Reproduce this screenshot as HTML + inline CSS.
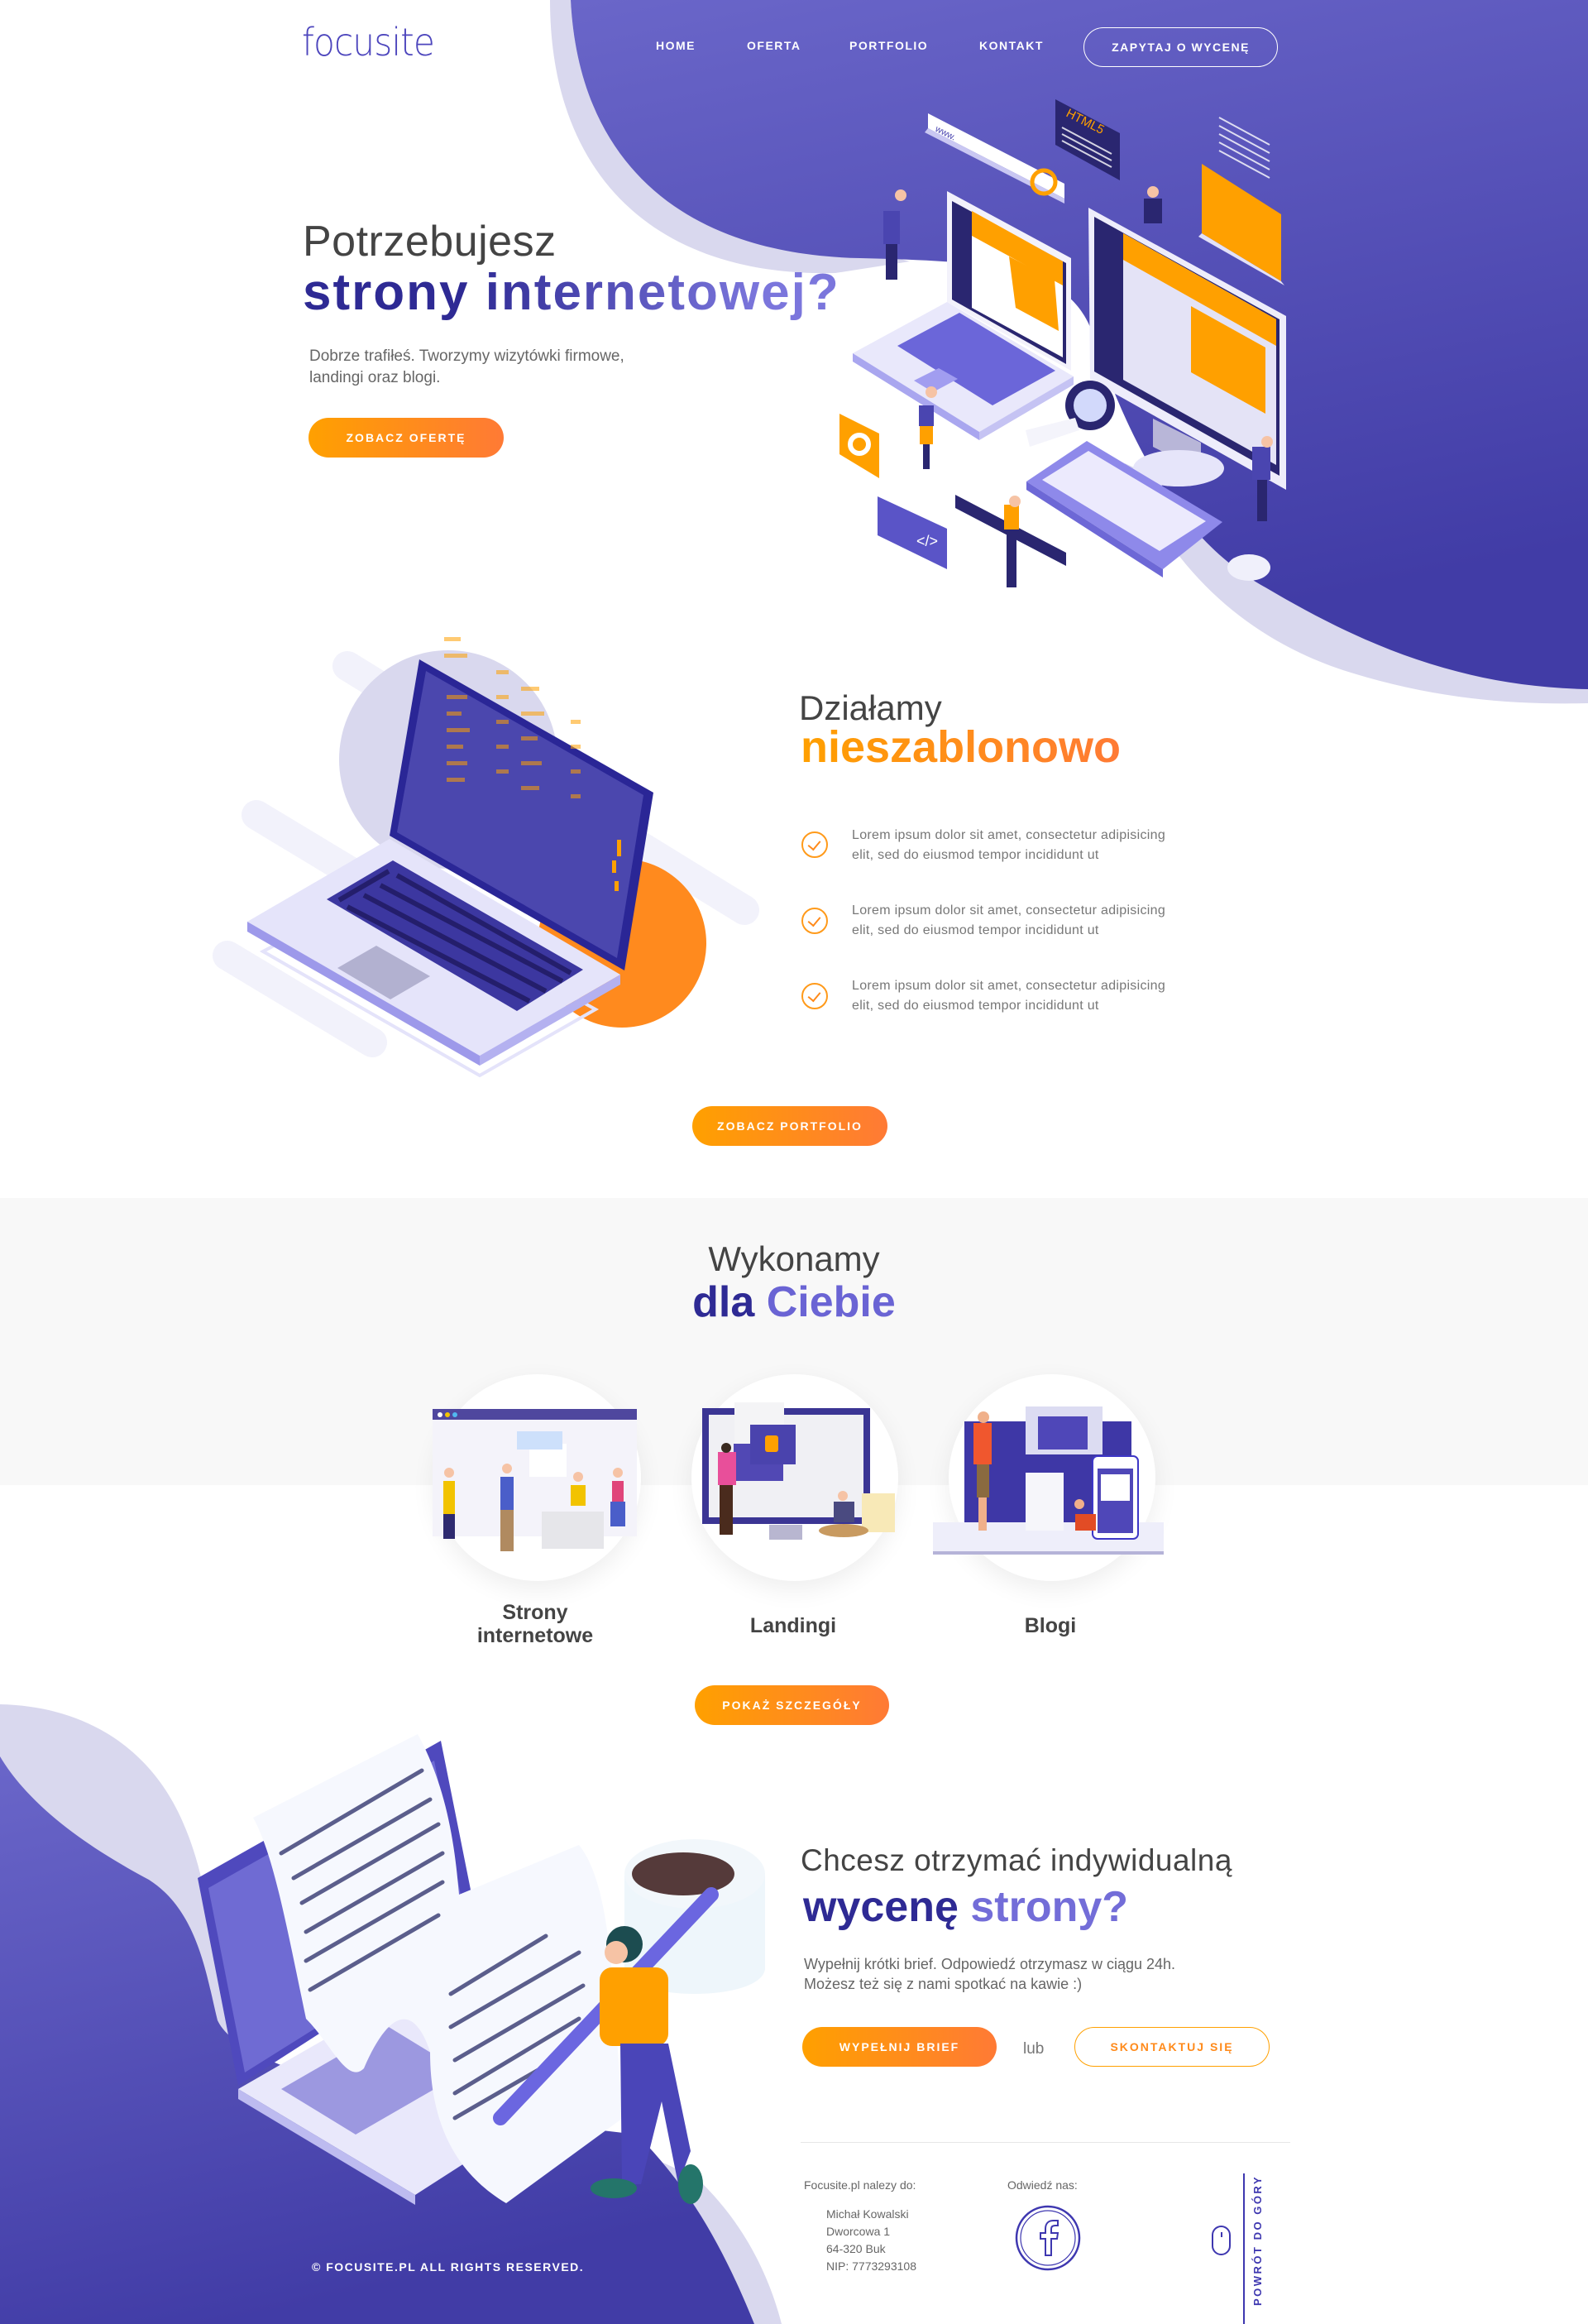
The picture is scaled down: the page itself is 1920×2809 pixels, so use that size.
<!DOCTYPE html>
<html><head><meta charset="utf-8">
<style>
*{margin:0;padding:0;box-sizing:border-box}
body{width:1920px;height:2809px;position:relative;overflow:hidden;background:#fff;font-family:"Liberation Sans",sans-serif;color:#555}
.a{position:absolute}
.btn{position:absolute;height:48px;border-radius:24px;background:linear-gradient(90deg,#ffa000,#ff7a35);color:#fff;font-weight:bold;font-size:14px;letter-spacing:2px;display:flex;align-items:center;justify-content:center}
.nav{position:absolute;top:47px;color:#fff;font-weight:bold;font-size:14px;letter-spacing:1.5px}
.li{position:absolute;left:1030px;font-size:16px;line-height:24px;color:#777;letter-spacing:.3px}
.chk{position:absolute;left:969px;width:32px;height:32px;border:2px solid #ff9a1a;border-radius:50%}
.chk:after{content:"";position:absolute;left:9px;top:6px;width:7px;height:12px;border-right:2.5px solid #ff8a1a;border-bottom:2.5px solid #ff8a1a;transform:rotate(40deg)}
.circ{position:absolute;width:250px;height:250px;border-radius:50%;background:#fff;box-shadow:0 10px 30px rgba(0,0,0,.07)}
.lab{position:absolute;width:260px;text-align:center;font-weight:bold;font-size:25px;color:#444;line-height:28px}
</style></head><body>

<!-- top blob -->
<svg class="a" style="left:0;top:0" width="1920" height="900">
<defs><linearGradient id="pg" x1="0" y1="0" x2="0.3" y2="1"><stop offset="0" stop-color="#6a66c9"/><stop offset="1" stop-color="#413ca6"/></linearGradient></defs>
<path d="M665,0 C665,210 790,335 1010,330 L1100,316 L1040,300 C830,296 700,200 690,0 Z" fill="#d9d8ee"/>
<path d="M1360,560 C1420,700 1520,780 1640,815 C1740,845 1830,852 1920,850 L1920,820 Z" fill="#d9d8ee"/>
<path d="M690,0 C700,200 830,308 1040,312 C1200,316 1290,322 1320,400 C1360,520 1420,650 1530,710 C1640,775 1760,830 1920,833 L1920,0 Z" fill="url(#pg)"/>
</svg>

<!-- hero illustration -->
<svg class="a" style="left:0;top:0" width="1920" height="760">
<!-- www bar -->
<polygon points="1122,137 1287,222 1287,240 1122,155" fill="#fff"/><polygon points="1122,155 1287,240 1287,246 1118,160" fill="#c9c7f2"/>
<text x="1130" y="158" font-size="11" fill="#4a45b0" transform="rotate(27 1130 158)" font-family="Liberation Sans">www.</text>
<circle cx="1262" cy="220" r="14" fill="none" stroke="#ffa000" stroke-width="5"/>
<!-- html5 -->
<polygon points="1276,120 1354,161 1354,218 1276,175" fill="#2a2670"/>
<text x="1288" y="140" font-size="15" fill="#ffa000" transform="rotate(27 1288 140)" font-family="Liberation Sans">HTML5</text>
<g stroke="#fff" stroke-width="2" opacity=".8"><line x1="1284" y1="154" x2="1344" y2="186"/><line x1="1284" y1="162" x2="1344" y2="194"/><line x1="1284" y1="170" x2="1344" y2="202"/></g>
<!-- folder -->
<g stroke="#fff" stroke-width="2" opacity=".8"><line x1="1474" y1="142" x2="1535" y2="175"/><line x1="1474" y1="152" x2="1535" y2="185"/><line x1="1474" y1="162" x2="1535" y2="195"/><line x1="1474" y1="172" x2="1535" y2="205"/><line x1="1474" y1="182" x2="1535" y2="215"/></g>
<polygon points="1453,198 1549,259 1549,340 1453,282" fill="#ffa000"/>
<polygon points="1453,282 1549,340 1553,345 1449,286" fill="#e3e1f8"/>
<!-- laptop -->
<polygon points="1031,427 1145,365 1298,455 1184,522" fill="#e9e8fb"/>
<polygon points="1031,427 1184,522 1184,532 1031,437" fill="#a9a6ef"/>
<polygon points="1184,522 1298,455 1298,465 1184,532" fill="#c5c3f3"/>
<polygon points="1085,418 1160,378 1276,448 1200,490" fill="#6b66d9"/>
<polygon points="1105,460 1135,445 1158,458 1128,474" fill="#a19df0"/>
<polygon points="1145,231 1295,312 1295,448 1145,365" fill="#f3f2fb"/>
<polygon points="1151,243 1289,318 1289,440 1151,362" fill="#2a2670"/>
<polygon points="1175,255 1285,316 1285,432 1175,372" fill="#fff"/>
<polygon points="1175,255 1285,316 1285,345 1175,285" fill="#ffa000"/>
<polygon points="1220,310 1275,338 1280,400 1228,372" fill="#ffa000"/>
<!-- monitor -->
<polygon points="1316,251 1555,382 1555,592 1318,459" fill="#eeedfb"/>
<polygon points="1323,262 1547,386 1547,575 1323,449" fill="#2a2670"/>
<polygon points="1358,282 1543,386 1543,562 1358,459" fill="#e4e3f6"/>
<polygon points="1358,282 1543,386 1543,418 1358,314" fill="#ffa000"/>
<polygon points="1440,370 1530,420 1530,500 1440,450" fill="#ffa000"/>
<polygon points="1394,506 1452,535 1452,570 1394,540" fill="#b8b6d8"/>
<ellipse cx="1425" cy="566" rx="55" ry="22" fill="#e6e5fa"/>
<!-- magnifier -->
<circle cx="1318" cy="490" r="30" fill="#2a2670"/><circle cx="1318" cy="490" r="20" fill="#d2d9fb"/>
<polygon points="1240,520 1300,505 1305,520 1245,540" fill="#f4f4fb"/>
<!-- keyboard -->
<polygon points="1241,582 1314,533 1478,631 1406,688" fill="#8e89ea"/>
<polygon points="1241,582 1406,688 1406,698 1241,592" fill="#6d68d6"/>
<polygon points="1260,580 1316,545 1458,630 1402,666" fill="#eceafd"/>
<ellipse cx="1510" cy="686" rx="26" ry="16" fill="#f0f0fb"/>
<!-- gear card -->
<polygon points="1015,500 1063,524 1063,578 1015,549" fill="#ffa000"/>
<circle cx="1039" cy="537" r="11" fill="none" stroke="#fff" stroke-width="6"/>
<!-- chat -->
<polygon points="1061,600 1145,639 1145,688 1061,647" fill="#5a54c7"/>
<text x="1108" y="660" font-size="18" fill="#fff" font-family="Liberation Sans">&lt;/&gt;</text>
<!-- ruler -->
<polygon points="1155,598 1289,668 1289,684 1155,614" fill="#2a2670"/>
<!-- people -->
<g fill="#2a2670"><rect x="1071" y="258" width="14" height="80"/><rect x="1116" y="505" width="8" height="62"/><rect x="1217" y="635" width="12" height="75"/><rect x="1520" y="560" width="12" height="70"/></g>
<g fill="#4a45b0"><rect x="1068" y="255" width="20" height="40"/><rect x="1514" y="540" width="22" height="40"/><rect x="1111" y="490" width="18" height="25"/></g>
<g fill="#ffa000"><rect x="1112" y="515" width="16" height="22"/><rect x="1214" y="610" width="18" height="30"/></g>
<g fill="#f6c3a5"><circle cx="1089" cy="236" r="7"/><circle cx="1126" cy="474" r="7"/><circle cx="1227" cy="606" r="7"/><circle cx="1532" cy="534" r="7"/><circle cx="1394" cy="232" r="7"/></g>
<rect x="1383" y="240" width="22" height="30" fill="#2a2670"/>
</svg>

<!-- header -->
<div class="a" style="left:365px;top:24px;font-size:46px;font-weight:300;color:#4d46bd;letter-spacing:-1px;font-family:'DejaVu Sans','Liberation Sans',sans-serif;transform:scaleX(.92);transform-origin:left">focusite</div>
<div class="nav" style="left:793px">HOME</div>
<div class="nav" style="left:903px">OFERTA</div>
<div class="nav" style="left:1027px">PORTFOLIO</div>
<div class="nav" style="left:1184px">KONTAKT</div>
<div class="a" style="left:1310px;top:33px;width:235px;height:48px;border:1.5px solid #fff;border-radius:24px;color:#fff;font-weight:bold;font-size:14px;letter-spacing:1.5px;display:flex;align-items:center;justify-content:center">ZAPYTAJ O WYCENĘ</div>

<!-- hero text -->
<div class="a" style="left:366px;top:262px;font-size:52px;font-weight:300;color:#444;letter-spacing:.5px">Potrzebujesz</div>
<div class="a" style="left:366px;top:318px;font-size:62px;font-weight:bold;letter-spacing:2px;background:linear-gradient(90deg,#2e2a94 30%,#7b76dc 85%);-webkit-background-clip:text;color:transparent">strony internetowej?</div>
<div class="a" style="left:374px;top:418px;font-size:19px;line-height:26px;color:#666">Dobrze trafiłeś. Tworzymy wizytówki firmowe,<br>landingi oraz blogi.</div>
<div class="btn" style="left:373px;top:505px;width:236px">ZOBACZ OFERTĘ</div>

<!-- section 2 illustration -->
<svg class="a" style="left:0;top:740px" width="960" height="600">
<g transform="translate(0,-740)">
<g stroke="#f2f2fb" stroke-width="36" stroke-linecap="round"><line x1="420" y1="805" x2="900" y2="1100"/><line x1="310" y1="985" x2="650" y2="1190"/><line x1="275" y1="1155" x2="450" y2="1260"/></g>
<circle cx="542" cy="918" r="132" fill="#d9d8ee"/>
<circle cx="752" cy="1140" r="102" fill="#ff8a1e"/>
<polygon points="318,1150 580,1300 720,1220 460,1075" fill="none" stroke="#e4e3fa" stroke-width="4"/>
<polygon points="299,1114 471,1014 750,1178 580,1276" fill="#e5e4fa"/>
<polygon points="299,1114 580,1276 580,1288 299,1126" fill="#9d99ea"/>
<polygon points="580,1276 750,1178 750,1190 580,1288" fill="#b4b1f0"/>
<polygon points="395,1087 475,1040 705,1172 625,1222" fill="#3c37a0"/>
<g stroke="#241e6b" stroke-width="6"><line x1="410" y1="1088" x2="470" y2="1053"/><line x1="420" y1="1096" x2="640" y2="1210"/><line x1="440" y1="1082" x2="660" y2="1198"/><line x1="460" y1="1070" x2="680" y2="1186"/><line x1="480" y1="1058" x2="690" y2="1176"/></g>
<polygon points="408,1170 455,1143 520,1180 472,1208" fill="#b2b1d0"/>
<polygon points="507,797 790,958 755,1173 471,1010" fill="#2a2696"/>
<polygon points="515,811 778,961 746,1158 480,1006" fill="#4b47ae"/>
<g fill="#ffa000" opacity=".55"><rect x="537" y="770" width="20" height="5"/><rect x="537" y="790" width="28" height="5"/><rect x="540" y="840" width="25" height="5"/><rect x="540" y="860" width="18" height="5"/><rect x="540" y="880" width="28" height="5"/><rect x="540" y="900" width="20" height="5"/><rect x="540" y="920" width="25" height="5"/><rect x="540" y="940" width="22" height="5"/><rect x="600" y="810" width="15" height="5"/><rect x="600" y="840" width="15" height="5"/><rect x="600" y="870" width="15" height="5"/><rect x="600" y="900" width="15" height="5"/><rect x="600" y="930" width="15" height="5"/><rect x="630" y="830" width="22" height="5"/><rect x="630" y="860" width="28" height="5"/><rect x="630" y="890" width="20" height="5"/><rect x="630" y="920" width="25" height="5"/><rect x="630" y="950" width="22" height="5"/><rect x="690" y="870" width="12" height="5"/><rect x="690" y="900" width="12" height="5"/><rect x="690" y="930" width="12" height="5"/><rect x="690" y="960" width="12" height="5"/></g>
<g fill="#ffa000"><rect x="746" y="1015" width="5" height="20"/><rect x="740" y="1040" width="5" height="15"/><rect x="743" y="1065" width="5" height="12"/></g>
</g></svg>

<!-- section 2 text -->
<div class="a" style="left:966px;top:832px;font-size:42px;font-weight:300;color:#444">Działamy</div>
<div class="a" style="left:968px;top:872px;font-size:54px;font-weight:bold;background:linear-gradient(90deg,#ffa000,#ff7a35);-webkit-background-clip:text;color:transparent">nieszablonowo</div>
<div class="chk" style="top:1005px"></div><div class="li" style="top:998px">Lorem ipsum dolor sit amet, consectetur adipisicing<br>elit, sed do eiusmod tempor incididunt ut</div>
<div class="chk" style="top:1097px"></div><div class="li" style="top:1089px">Lorem ipsum dolor sit amet, consectetur adipisicing<br>elit, sed do eiusmod tempor incididunt ut</div>
<div class="chk" style="top:1188px"></div><div class="li" style="top:1180px">Lorem ipsum dolor sit amet, consectetur adipisicing<br>elit, sed do eiusmod tempor incididunt ut</div>
<div class="btn" style="left:837px;top:1337px;width:236px">ZOBACZ PORTFOLIO</div>

<!-- section 3 -->
<div class="a" style="left:0;top:1448px;width:1920px;height:347px;background:#f8f8f8"></div>
<div class="a" style="left:0;top:1498px;width:1920px;text-align:center;font-size:42px;font-weight:300;color:#444">Wykonamy</div>
<div class="a" style="left:0;top:1544px;width:1920px;text-align:center;font-size:52px;font-weight:bold"><span style="color:#2e2a94">dla </span><span style="color:#6a64d4">Ciebie</span></div>
<div class="circ" style="left:525px;top:1661px"></div>
<div class="circ" style="left:836px;top:1661px"></div>
<div class="circ" style="left:1147px;top:1661px"></div>
<svg class="a" style="left:500px;top:1680px" width="920" height="220">
<g transform="translate(-500,-1680)">
<rect x="523" y="1703" width="247" height="154" fill="#f4f3fa"/><rect x="523" y="1703" width="247" height="13" fill="#4f479e"/>
<circle cx="532" cy="1710" r="3" fill="#fff"/><circle cx="541" cy="1710" r="3" fill="#f2c300"/><circle cx="550" cy="1710" r="3" fill="#51b8f0"/>
<rect x="640" y="1745" width="45" height="40" fill="#fff"/><rect x="625" y="1730" width="55" height="22" fill="#cde0fb"/>
<rect x="655" y="1827" width="75" height="45" fill="#e6e6ea"/>
<rect x="536" y="1790" width="14" height="40" fill="#f2c300"/><rect x="536" y="1830" width="14" height="30" fill="#2e2a70"/>
<rect x="605" y="1785" width="16" height="40" fill="#4a5ec9"/><rect x="605" y="1825" width="16" height="50" fill="#b08a60"/>
<rect x="690" y="1795" width="18" height="25" fill="#f2c300"/><rect x="740" y="1790" width="14" height="25" fill="#e0457a"/><rect x="738" y="1815" width="18" height="30" fill="#4a5ec9"/>
<g fill="#f6c3a5"><circle cx="543" cy="1780" r="6"/><circle cx="613" cy="1775" r="6"/><circle cx="699" cy="1785" r="6"/><circle cx="747" cy="1780" r="6"/></g>
<rect x="849" y="1702" width="203" height="140" fill="#3b3594"/><rect x="857" y="1710" width="187" height="124" fill="#f0f0f4"/>
<rect x="888" y="1695" width="60" height="70" fill="#f4f4f6"/><rect x="887" y="1745" width="60" height="45" fill="#5148b4"/>
<rect x="907" y="1722" width="55" height="48" fill="#4a43ad"/><rect x="925" y="1735" width="16" height="20" rx="3" fill="#ffa000"/>
<rect x="930" y="1843" width="40" height="18" fill="#b8b6d0"/>
<rect x="868" y="1755" width="22" height="40" fill="#e84f9a"/><rect x="870" y="1795" width="16" height="60" fill="#4a2b1d"/><circle cx="878" cy="1750" r="6" fill="#3a2a20"/>
<rect x="1042" y="1805" width="40" height="47" fill="#f8e9b7"/>
<rect x="1008" y="1815" width="25" height="25" fill="#4a4a80"/><ellipse cx="1020" cy="1850" rx="30" ry="8" fill="#c89a60"/><circle cx="1019" cy="1808" r="6" fill="#f6c3a5"/>
<rect x="1166" y="1718" width="202" height="122" fill="#3e37a6"/><rect x="1128" y="1840" width="279" height="38" fill="#eeeefa"/><rect x="1128" y="1875" width="279" height="4" fill="#b5b3d8"/>
<rect x="1240" y="1780" width="46" height="70" fill="#f6f6fa"/><rect x="1240" y="1700" width="93" height="58" fill="#dcdcf2"/><rect x="1255" y="1712" width="60" height="40" fill="#4f47b8"/>
<rect x="1321" y="1760" width="55" height="100" rx="6" fill="#fff" stroke="#3e37c6" stroke-width="2"/><rect x="1327" y="1775" width="43" height="78" fill="#4f47b8"/><rect x="1331" y="1782" width="35" height="32" fill="#fff"/>
<rect x="1177" y="1720" width="22" height="50" fill="#f0572e"/><rect x="1181" y="1770" width="15" height="40" fill="#8a6a40"/><rect x="1183" y="1810" width="10" height="40" fill="#f0b08a"/><circle cx="1189" cy="1713" r="7" fill="#f0b08a"/>
<rect x="1300" y="1830" width="25" height="20" fill="#e24c25"/><circle cx="1305" cy="1818" r="6" fill="#f0b08a"/>
</g></svg>
<div class="lab" style="left:517px;top:1935px">Strony<br>internetowe</div>
<div class="lab" style="left:829px;top:1951px">Landingi</div>
<div class="lab" style="left:1140px;top:1951px">Blogi</div>
<div class="btn" style="left:840px;top:2037px;width:235px">POKAŻ SZCZEGÓŁY</div>

<!-- bottom blob -->
<svg class="a" style="left:0;top:2040px" width="960" height="769">
<defs><linearGradient id="pg2" x1="0" y1="0" x2="0.3" y2="1"><stop offset="0" stop-color="#6a66c9"/><stop offset="1" stop-color="#413ca6"/></linearGradient></defs>
<g transform="translate(0,-2040)">
<path d="M0,2060 C100,2062 180,2110 220,2200 C265,2300 250,2400 300,2470 C420,2580 700,2540 850,2640 C900,2690 930,2750 945,2809 L0,2809 Z" fill="#d9d8ee"/>
<path d="M0,2123 C40,2190 120,2240 180,2272 C240,2310 250,2390 263,2442 C300,2520 600,2560 770,2580 C840,2650 880,2730 912,2809 L0,2809 Z" fill="url(#pg2)"/>
<polygon points="239,2270 533,2104 579,2334 288,2521" fill="#4f49bd"/>
<polygon points="252,2282 525,2128 566,2336 296,2505" fill="#6f6bd3"/>
<polygon points="288,2525 540,2380 740,2500 502,2653" fill="#e9e8fb"/>
<polygon points="288,2525 502,2653 502,2665 288,2537" fill="#bdbbf0"/>
<polygon points="340,2525 470,2450 560,2505 430,2580" fill="#9c98e0"/>
<path d="M306,2197 L505,2096 C540,2160 550,2230 555,2290 L700,2230 C740,2280 740,2400 753,2560 L612,2663 C540,2620 520,2550 520,2480 C500,2420 470,2430 440,2500 C420,2520 400,2470 370,2440 C345,2320 330,2240 306,2197 Z" fill="#f6f8fe"/>
<g stroke="#5b5e8c" stroke-width="5" stroke-linecap="round"><line x1="340" y1="2240" x2="510" y2="2140"/><line x1="355" y1="2270" x2="520" y2="2175"/><line x1="365" y1="2300" x2="530" y2="2205"/><line x1="370" y1="2335" x2="535" y2="2240"/><line x1="370" y1="2370" x2="535" y2="2275"/><line x1="375" y1="2405" x2="530" y2="2315"/><line x1="545" y1="2410" x2="660" y2="2340"/><line x1="545" y1="2450" x2="700" y2="2360"/><line x1="550" y1="2490" x2="705" y2="2400"/><line x1="550" y1="2530" x2="700" y2="2440"/><line x1="550" y1="2560" x2="680" y2="2485"/></g>
<path d="M755,2265 L755,2380 C760,2420 920,2420 925,2380 L925,2265 Z" fill="#eef6fb"/>
<ellipse cx="840" cy="2265" rx="85" ry="42" fill="#f2f7fb"/><ellipse cx="826" cy="2265" rx="62" ry="26" fill="#553a3a"/>
<line x1="860" y1="2290" x2="605" y2="2560" stroke="#6b66e0" stroke-width="18" stroke-linecap="round"/>
<rect x="725" y="2378" width="83" height="95" rx="15" fill="#ffa000"/>
<path d="M750,2470 L808,2470 L835,2600 L820,2640 L800,2540 L775,2640 L752,2640 Z" fill="#4a45b8"/>
<circle cx="755" cy="2350" r="22" fill="#1c4c50"/><circle cx="745" cy="2360" r="14" fill="#f6c3a5"/>
<ellipse cx="742" cy="2645" rx="28" ry="12" fill="#24756a"/><ellipse cx="835" cy="2640" rx="15" ry="24" fill="#24756a"/>
</g></svg>
<div class="a" style="left:377px;top:2732px;color:#fff;font-weight:bold;font-size:14px;letter-spacing:1.5px">© FOCUSITE.PL ALL RIGHTS RESERVED.</div>

<!-- CTA -->
<div class="a" style="left:968px;top:2228px;font-size:37px;font-weight:300;color:#444;letter-spacing:.5px">Chcesz otrzymać indywidualną</div>
<div class="a" style="left:971px;top:2275px;font-size:52px;font-weight:bold"><span style="color:#2e2a94">wycenę </span><span style="color:#736dd8">strony?</span></div>
<div class="a" style="left:972px;top:2362px;font-size:18px;line-height:24px;color:#666">Wypełnij krótki brief. Odpowiedź otrzymasz w ciągu 24h.<br>Możesz też się z nami spotkać na kawie :)</div>
<div class="btn" style="left:970px;top:2450px;width:235px">WYPEŁNIJ BRIEF</div>
<div class="a" style="left:1237px;top:2466px;font-size:19px;color:#777">lub</div>
<div class="a" style="left:1299px;top:2450px;width:236px;height:48px;border:1.5px solid #ffa000;border-radius:24px;color:#ff8a1a;font-weight:bold;font-size:14px;letter-spacing:2px;display:flex;align-items:center;justify-content:center">SKONTAKTUJ SIĘ</div>
<div class="a" style="left:968px;top:2589px;width:592px;height:1px;background:#e6e6e6"></div>
<div class="a" style="left:972px;top:2633px;font-size:14px;color:#666">Focusite.pl nalezy do:</div>
<div class="a" style="left:999px;top:2666px;font-size:14px;line-height:21px;color:#666">Michał Kowalski<br>Dworcowa 1<br>64-320 Buk<br>NIP: 7773293108</div>
<div class="a" style="left:1218px;top:2633px;font-size:14px;color:#666">Odwiedź nas:</div>
<svg class="a" style="left:1226px;top:2664px" width="82" height="82">
<circle cx="41" cy="41" r="38" fill="none" stroke="#3e37b0" stroke-width="2.5"/>
<circle cx="41" cy="41" r="33" fill="none" stroke="#3e37b0" stroke-width="1.2"/>
<path d="M45,62 L45,42 L52,42 L53,35 L45,35 L45,30 C45,27 47,26 50,26 L53,26 L53,20 L48,20 C41,20 38,24 38,30 L38,35 L32,35 L32,42 L38,42 L38,62 Z" fill="none" stroke="#3e37b0" stroke-width="2"/>
</svg>
<div class="a" style="left:1465px;top:2690px;width:23px;height:36px;border:2px solid #3e37b0;border-radius:12px"></div>
<div class="a" style="left:1476px;top:2698px;width:2px;height:6px;background:#3e37b0"></div>
<div class="a" style="left:1503px;top:2627px;width:2px;height:182px;background:#3e37b0"></div>
<div class="a" style="left:1443px;top:2698px;width:160px;height:20px;transform:rotate(-90deg);transform-origin:center;color:#3e37b0;font-weight:bold;font-size:13px;letter-spacing:2.5px;text-align:center">POWRÓT DO GÓRY</div>
</body></html>
